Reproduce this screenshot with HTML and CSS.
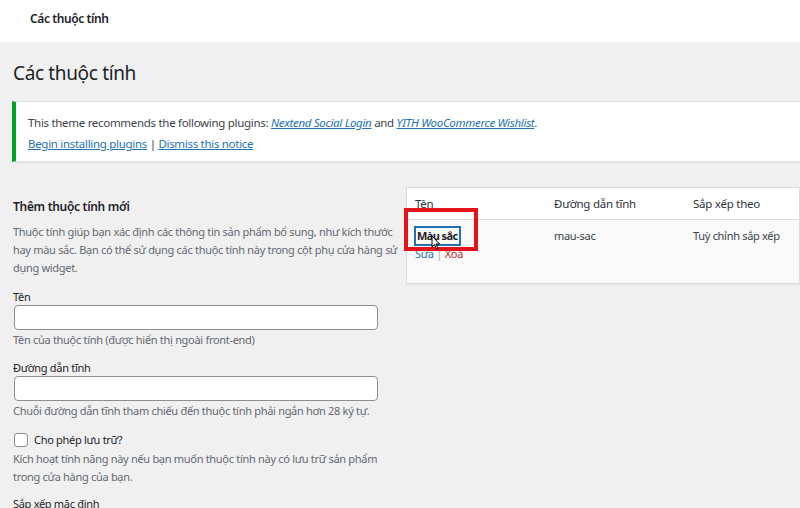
FILE: index.html
```html
<!DOCTYPE html>
<html lang="vi">
<head>
<meta charset="utf-8">
<link rel="stylesheet" href="styles.css">
</head>
<body>
<header class="topbar">Các thuộc tính</header>
<main class="wrap">
  <h1 class="page-title">Các thuộc tính</h1>
  <div class="notice">
    <p>This theme recommends the following plugins: <a href="#"><em>Nextend Social Login</em></a> and <a href="#"><em>YITH WooCommerce Wishlist</em></a>.</p>
    <p><a href="#">Begin installing plugins</a> | <a href="#">Dismiss this notice</a></p>
  </div>
  <div class="columns">
    <section class="col-left">
      <h2 class="form-title">Thêm thuộc tính mới</h2>
      <p class="desc">Thuộc tính giúp bạn xác định các thông tin sản phẩm bổ sung, như kích thước hay màu sắc. Bạn có thể sử dụng các thuộc tính này trong cột phụ cửa hàng sử dụng widget.</p>
      <div class="field first">
        <label class="label">Tên</label>
        <input class="input" type="text">
        <p class="help">Tên của thuộc tính (được hiển thị ngoài front-end)</p>
      </div>
      <div class="field">
        <label class="label">Đường dẫn tĩnh</label>
        <input class="input" type="text">
        <p class="help">Chuỗi đường dẫn tĩnh tham chiếu đến thuộc tính phải ngắn hơn 28 ký tự.</p>
      </div>
      <div class="field check-field">
        <label class="check"><span class="box"></span>Cho phép lưu trữ?</label>
        <p class="help tight">Kích hoạt tính năng này nếu bạn muốn thuộc tính này có lưu trữ sản phẩm trong cửa hàng của bạn.</p>
      </div>
      <div class="field last">
        <label class="label">Sắp xếp mặc định</label>
      </div>
    </section>
    <section class="col-right">
      <div class="table">
        <div class="thead">
          <div class="c1">Tên</div>
          <div class="c2">Đường dẫn tĩnh</div>
          <div class="c3">Sắp xếp theo</div>
        </div>
        <div class="trow">
          <div class="c1">
            <a class="name" href="#">Màu sắc</a>
            <div class="actions"><a href="#">Sửa</a> | <a class="del" href="#">Xoá</a></div>
          </div>
          <div class="c2">mau-sac</div>
          <div class="c3">Tuỳ chỉnh sắp xếp</div>
        </div>
        <div class="highlight"></div>
        <svg class="cursor" width="10" height="15" viewBox="0 0 10 15"><path d="M1 1 L1 12 L3.5 9.5 L5.5 14 L7 13.3 L5 9 L8.5 9 Z" fill="#fff" stroke="#000" stroke-width="1"/></svg>
      </div>
    </section>
  </div>
</main>
</body>
</html>
```

FILE: styles.css
```css
* { box-sizing: border-box; }
body {
  margin: 0;
  background: #f0f0f1;
  font-family: "Noto Sans", "Open Sans", sans-serif;
  font-size: 11px;
  letter-spacing: -0.3px;
  color: #3c434a;
  overflow: hidden;
}
a { color: #2271b1; }
.topbar {
  height: 42px;
  background: #fff;
  padding: 10px 0 0 30px;
  font-size: 12px;
  letter-spacing: -0.4px;
  font-weight: 600;
  color: #1d2327;
}
.wrap { padding: 0 0 0 13px; }
.page-title {
  margin: 0;
  padding: 17px 0 0;
  font-size: 19px;
  letter-spacing: -0.35px;
  font-weight: 400;
  color: #1d2327;
  line-height: 28px;
}
.notice {
  margin: 14px 0 0 -1px;
  background: #fff;
  border-left: 4px solid #00a32a;
  box-shadow: 0 1px 1px rgba(0,0,0,.06);
  border-top: 1px solid #e2e2e2;
  border-bottom: 1px solid #e2e2e2;
  padding: 12px 12px 8px;
  height: 61px;
  font-size: 11.5px;
  letter-spacing: -0.3px;
}
.notice p { margin: 0 0 3px; line-height: 18px; }
.columns { display: flex; margin-top: 27px; }
.col-left { width: 385px; }
.col-right { flex: 1; padding-left: 8px; }
.form-title {
  margin: 9px 0 0;
  font-size: 12px;
  letter-spacing: -0.3px;
  font-weight: 600;
  color: #1d2327;
  line-height: 18px;
}
.desc { margin: 7px 0 0; line-height: 18px; color: #646970; }
.field { margin-top: 12px; }
.field.first { margin-top: 13px; }
.field.check-field { margin-top: 11px; }
.field.last { margin-top: 11px; }
.label { display: block; line-height: 14px; color: #1d2327; }
.input {
  display: block;
  width: 364px;
  height: 25px;
  margin: 1px 0 0 1px;
  border: 1px solid #8c8f94;
  border-radius: 4px;
  background: #fff;
}
.help { margin: 1px 0 0; line-height: 18px; color: #646970; }
.help.tight { margin-top: 1px; }
.check { display: flex; align-items: center; gap: 6px; color: #1d2327; line-height: 18px; padding-left: 1px; }
.box { width: 14px; height: 14px; border: 1px solid #8c8f94; border-radius: 3px; background: #fff; }
.table {
  position: relative;
  background: #fff;
  border: 1px solid #dcdcde;
  height: 97px;
  margin-top: -2px;
  box-shadow: 0 1px 1px rgba(0,0,0,.04);
}
.thead, .trow { display: flex; }
.thead { height: 32px; border-bottom: 1px solid #dcdcde; align-items: center; font-size: 11.5px; letter-spacing: -0.25px; color: #2c3338; }
.trow { padding-top: 7px; background: #f9f9f9; height: 63px; }
.c1 { width: 139px; padding-left: 8px; }
.c2 { width: 139px; padding-left: 8px; }
.c3 { flex: 1; padding-left: 8px; }
.trow .c2, .trow .c3 { line-height: 18px; }
.name {
  display: inline-block;
  font-weight: 700;
  letter-spacing: -0.6px;
  color: #1d2327;
  text-decoration: none;
  border: 1px solid #2271b1;
  box-shadow: 0 0 0 1px #2271b1;
  padding: 0 1px;
  line-height: 16px;
}
.actions { margin-top: 0; color: #a7aaad; line-height: 18px; }
.actions a { text-decoration: none; }
.actions .del { color: #b32d2e; }
.highlight {
  position: absolute;
  left: -3px; top: 20px;
  width: 74px; height: 43px;
  border: 4px solid #e3131b;
}
.cursor { position: absolute; left: 24px; top: 47px; }
```
